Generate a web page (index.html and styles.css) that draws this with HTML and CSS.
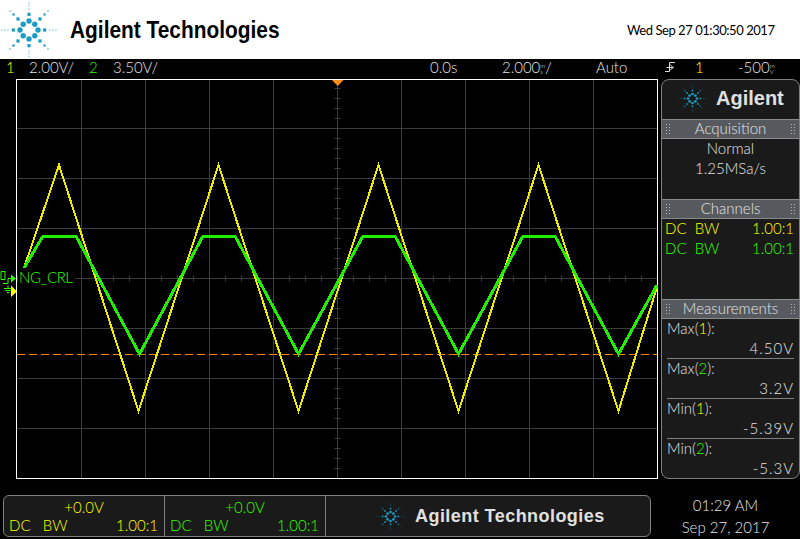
FILE: index.html
```html
<!DOCTYPE html>
<html lang="en">
<head>
    <meta charset="UTF-8">
    <title>Agilent Technologies</title>
    <link rel="stylesheet" href="styles.css">
</head>
<body>
    <svg class="defs" width="0" height="0">
        <defs>
            <g id="arm">
                <circle cx="0" cy="-9" r="2.7"/>
                <circle cx="5.8" cy="-5.8" r="2.7"/>
                <rect x="-1.6" y="-17.3" width="3.2" height="3.2"/>
                <rect x="9.4" y="-12.6" width="3.2" height="3.2"/>
                <rect x="14.4" y="-16.6" width="2.2" height="2.2"/>
                <rect x="18.4" y="-19.6" width="1.2" height="1.2"/>
                <rect x="-.5" y="-21.5" width="1" height="1"/>
                <rect x="-.5" y="-24.5" width="1" height="1"/>
                <rect x="-.5" y="-27.5" width="1" height="1"/>
            </g>
            <symbol id="logo" viewBox="-29 -29 58 58">
                <use href="#arm"/>
                <use href="#arm" transform="rotate(90)"/>
                <use href="#arm" transform="rotate(180)"/>
                <use href="#arm" transform="rotate(270)"/>
            </symbol>
        </defs>
    </svg>

    <header class="brand">
        <svg class="logo-big"><use href="#logo"/></svg>
        <div class="brand-name">Agilent Technologies</div>
        <div class="brand-date">Wed Sep 27 01:30:50 2017</div>
    </header>

    <div class="status">
        <span class="yellow">1</span>
        <span>2.00V/</span>
        <span class="green">2</span>
        <span>3.50V/</span>
        <span>0.0s</span>
        <span>2.000<span class="units"><i>m</i><i>s</i></span>/</span>
        <span>Auto</span>
        <svg class="edge" width="10" height="12" viewBox="0 0 10 12">
            <path d="M0 10.5h4.5V1.500H10M1.500 6.500h7M5 3.500l3 3-3 3" fill="none" stroke="#ddd"/>
        </svg>
        <span class="yellow">1</span>
        <span>-500<span class="units"><i>m</i><i>V</i></span></span>
    </div>

    <main class="scope-row">
        <svg class="scope" width="660" height="400" viewBox="0 79 660 400">
            <path class="grid" d="M81.500 80V478M145.500 80V478M209.500 80V478M273.500 80V478M337.500 80V478M401.500 80V478M465.500 80V478M529.500 80V478M593.500 80V478M17 128.500H657M17 178.500H657M17 228.500H657M17 278.500H657M17 328.500H657M17 378.500H657M17 428.500H657"/>
            <line class="ticks" x1="337.500" y1="88" x2="337.500" y2="478" stroke-dasharray="1 9"/>
            <line class="ticks" x1="17" y1="278.500" x2="657" y2="278.500" stroke-dasharray="1 15"/>
            <rect class="frame" x="16.500" y="79.500" width="641" height="399"/>
            <polygon class="orange-fill" points="332,80 343.500,80 337.700,86"/>
            <line class="cursor" x1="17" y1="354.500" x2="657" y2="354.500"/>
            <polyline class="wave-1" points="24,268 59,165 138.500,411 218.500,165 298.500,411 378.500,165 458.500,411 538.500,165 618.500,411 657,287"/>
            <polyline class="wave-2" points="24,268 43,236 76,236 139.500,354 203,236 235,236 298.500,354 363,236 395,236 458.500,354 523,236 555,236 618.500,354 657,285"/>
            <rect class="label-bg" x="18" y="270" width="57" height="16"/>
            <text class="label" x="19" y="283">NG_CRL</text>
            <path class="gnd" d="M1 271.500h4v8h-4zM3 283.500h5v-5h6M8 285.500v3M4 288.500h7M5.500 290.500h5M7 292.500h2"/>
            <polygon class="green-fill" points="11,274.500 16,278.500 11,282.500"/>
            <polygon class="yellow-fill" points="11,285.500 17,291.500 11,297"/>
        </svg>

        <aside class="panel">
            <div class="panel-logo">
                <svg class="logo-small"><use href="#logo"/></svg>
                <span>Agilent</span>
            </div>

            <h2 class="section-head"><span>Acquisition</span></h2>
            <div class="section-acq">
                <div class="line-center">Normal</div>
                <div class="line-center">1.25MSa/s</div>
            </div>

            <h2 class="section-head"><span>Channels</span></h2>
            <div class="section-chan">
                <div class="chan-row yellow"><span>DC&nbsp;&nbsp;BW</span><span>1.00:1</span></div>
                <div class="chan-row green"><span>DC&nbsp;&nbsp;BW</span><span>1.00:1</span></div>
            </div>

            <h2 class="section-head"><span>Measurements</span></h2>
            <div class="measure">
                <div class="measure-name">Max(<span class="yellow">1</span>):</div>
                <div class="measure-val">4.50V</div>
            </div>
            <div class="measure">
                <div class="measure-name">Max(<span class="green">2</span>):</div>
                <div class="measure-val">3.2V</div>
            </div>
            <div class="measure">
                <div class="measure-name">Min(<span class="yellow">1</span>):</div>
                <div class="measure-val">-5.39V</div>
            </div>
            <div class="measure">
                <div class="measure-name">Min(<span class="green">2</span>):</div>
                <div class="measure-val">-5.3V</div>
            </div>
        </aside>
    </main>

    <footer class="bottom">
        <div class="bottom-panel">
            <div class="chan-box yellow">
                <div class="chan-offset">+0.0V</div>
                <div class="chan-row"><span>DC&nbsp;&nbsp;&nbsp;BW</span><span>1.00:1</span></div>
            </div>
            <div class="chan-box green">
                <div class="chan-offset">+0.0V</div>
                <div class="chan-row"><span>DC&nbsp;&nbsp;&nbsp;BW</span><span>1.00:1</span></div>
            </div>
            <div class="bottom-brand">
                <svg class="logo-small"><use href="#logo"/></svg>
                <span>Agilent Technologies</span>
            </div>
        </div>
        <div class="clock">
            <div>01:29 AM</div>
            <div>Sep 27, 2017</div>
        </div>
    </footer>
</body>
</html>
```

FILE: styles.css
```css
body {
    margin: 0;
    width: 800px;
    height: 539px;
    overflow: hidden;
    background-color: #000;
    color: #e4e4e4;
    font-family: "Lato", "Roboto", sans-serif;
    font-weight: 300;
    font-size: 15px;
}
.defs {
    position: absolute;
}
#arm {
    fill: #1c9cc4;
}
.yellow {
    color: #ffff00;
}
.green {
    color: #33ff00;
}

/* top white band */
.brand {
    height: 59px;
    background-color: #fff;
    display: flex;
    align-items: center;
    color: #000;
}
.logo-big {
    width: 58px;
    height: 58px;
    margin-right: 12px;
}
.brand-name {
    font-family: "Liberation Sans", sans-serif;
    font-weight: 700;
    font-size: 24px;
    width: 557px;
    white-space: nowrap;
    transform: scaleX(.87);
    transform-origin: left center;
}
.brand-date {
    font-size: 13px;
    font-weight: 400;
    letter-spacing: -.45px;
    white-space: nowrap;
}

/* settings line */
.status {
    height: 20px;
    display: grid;
    grid-template-columns: 23px 60px 24px 317px 72px 94px 69px 30px 43px 1fr;
    align-items: start;
    padding-left: 6px;
    line-height: 17px;
}
.status > span {
    white-space: nowrap;
}
.units {
    display: inline-flex;
    flex-direction: column;
    vertical-align: middle;
    font-size: 6px;
    line-height: 6px;
}
.units i {
    font-style: normal;
}
.edge {
    display: block;
    margin-top: 2px;
}

/* scope area */
.scope-row {
    display: flex;
    height: 400px;
}
.scope {
    display: block;
    flex: none;
}
.grid {
    fill: none;
    stroke: #3c3c3c;
}
.ticks {
    stroke: #3c3c3c;
    stroke-width: 6;
}
.frame {
    fill: none;
    stroke: #fff;
}
.orange-fill {
    fill: #ff8c1a;
}
.cursor {
    stroke: #ff8000;
    stroke-dasharray: 8 4;
}
.wave-1 {
    fill: none;
    stroke: #eeea00;
    stroke-width: 2;
    shape-rendering: crispEdges;
}
.wave-2 {
    fill: none;
    stroke: #22ee00;
    stroke-width: 3;
    shape-rendering: crispEdges;
}
.label-bg {
    fill: #000;
}
.label {
    fill: #33ff00;
    font-size: 15px;
    letter-spacing: -.4px;
}
.gnd {
    fill: none;
    stroke: #33ff00;
}
.green-fill {
    fill: #33ff00;
}
.yellow-fill {
    fill: #ffff00;
}

/* right panel */
.panel {
    box-sizing: border-box;
    margin-left: 1px;
    width: 139px;
    height: 400px;
    background-color: #1a1a1a;
    border: 1px solid #808080;
    border-radius: 8px;
    overflow: hidden;
}
.panel-logo {
    box-sizing: border-box;
    height: 39px;
    padding: 0 0 2px 16px;
    display: flex;
    align-items: center;
    gap: 9px;
    font-family: "Liberation Sans", sans-serif;
    font-weight: 700;
    font-size: 20px;
    color: #e0e0e0;
}
.logo-small {
    width: 29px;
    height: 29px;
    flex: none;
}
.section-head {
    box-sizing: border-box;
    height: 20px;
    margin: 0;
    background-color: #565a5e;
    border-top: 1px solid #8a8a8a;
    border-bottom: 1px solid #8a8a8a;
    font-size: 15px;
    font-weight: 300;
    line-height: 16px;
    text-align: center;
    color: #e4e4e4;
    position: relative;
}
.section-head::before,
.section-head::after {
    content: "";
    position: absolute;
    top: 3px;
    width: 6px;
    height: 12px;
    background-image: radial-gradient(circle, #b5b5b5 .8px, transparent 1px);
    background-size: 3px 3px;
}
.section-head::before {
    left: 3px;
}
.section-head::after {
    right: 3px;
}
.section-acq {
    height: 60px;
}
.section-chan {
    height: 80px;
}
.line-center {
    height: 20px;
    line-height: 18px;
    text-align: center;
}
.chan-row {
    display: flex;
    justify-content: space-between;
    height: 20px;
    line-height: 18px;
    padding: 0 5px 0 3px;
}
.measure {
    box-sizing: border-box;
    height: 40px;
    margin: 0 5px;
    border-bottom: 1px solid #808080;
}
.measure:last-child {
    border-bottom: none;
}
.measure-name,
.measure-val {
    height: 20px;
    line-height: 18px;
}
.measure-val {
    text-align: right;
    letter-spacing: 1px;
}

/* bottom strip */
.bottom {
    height: 60px;
    display: flex;
    position: relative;
}
.bottom-panel {
    box-sizing: border-box;
    display: flex;
    margin: 16px 0 2px 3px;
    width: 648px;
    height: 42px;
    background-color: #1a1a1a;
    border: 1px solid #808080;
    border-radius: 6px;
}
.chan-box {
    box-sizing: border-box;
    width: 161px;
    border-right: 1px solid #808080;
}
.chan-offset {
    height: 20px;
    line-height: 22px;
    text-align: center;
}
.chan-box .chan-row {
    padding: 0 6px 0 5px;
}
.bottom-brand {
    display: flex;
    align-items: center;
    padding-left: 50px;
    gap: 10px;
    font-family: "Liberation Sans", sans-serif;
    font-weight: 700;
    font-size: 18px;
    letter-spacing: .45px;
    color: #e0e0e0;
    white-space: nowrap;
}
.clock {
    flex: 1;
    text-align: center;
    padding-top: 15px;
    line-height: 22px;
}
```
